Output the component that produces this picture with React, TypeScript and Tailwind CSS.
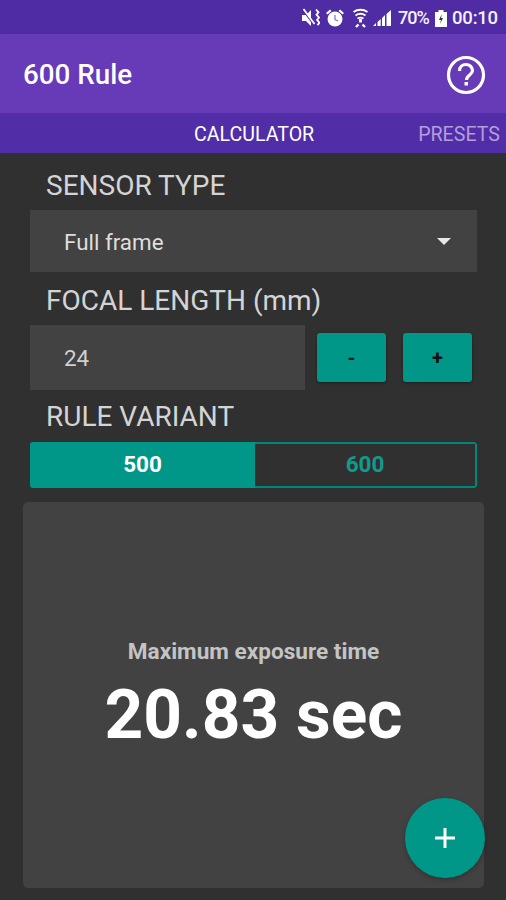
import type { ReactNode } from "react";

const font = { fontFamily: "Roboto, sans-serif" };

function StatusIcons() {
  return (
    <div className="flex items-center justify-end pr-[8px] pt-[2px] text-[18px] font-medium leading-none text-[#f4f1fb]">
      {/* muted vibrate */}
      <svg width="18" height="20" viewBox="0 0 18 20" fill="white">
        <path d="M0 7h4l5-5v16l-5-5H0z" />
        <path d="M1 2l11 15" stroke="#4f2ca3" strokeWidth="1.600" />
        <path d="M1.500 1l11 15" stroke="white" strokeWidth="1.800" />
        <path d="M14 1.500l2.500 2.800-2 2.400 2.500 2.800-2 2.400 2.500 2.800-2 2.400" stroke="white" strokeWidth="1.800" fill="none" />
      </svg>
      {/* alarm */}
      <svg width="18" height="20" viewBox="0 0 18 20" fill="white" className="ml-[6px]">
        <circle cx="9" cy="11" r="7.500" />
        <path d="M0 5l4-3.500 1.500 1.500-4 3.500zM18 5l-4-3.500-1.500 1.500 4 3.500z" />
        <path d="M9 7v4.500l3 1.500" stroke="#8f78c8" strokeWidth="1.300" fill="none" />
      </svg>
      {/* wifi */}
      <svg width="15" height="20" viewBox="0 0 15 20" fill="none" stroke="white" className="ml-[9px]">
        <path d="M0.500 4c4-3 10-3 14 0M2.500 7.500c3-2 7-2 10 0M4.500 10.500c2-1.200 4-1.200 6 0" strokeWidth="1.900" />
        <path d="M7.500 11v3.500" strokeWidth="2.800" />
        <path d="M3 19l2.500-2.500M12 19l-2.500-2.500" strokeWidth="2.400" />
      </svg>
      {/* signal */}
      <svg width="18" height="18" viewBox="0 0 18 18" fill="white" className="ml-[5px]">
        <path d="M0 17h3v-3zM4.500 17h3.200v-7l-3.200 3zM9 17h3V6L9 9zM13.500 17H18V1l-4.500 4z" />
      </svg>
      <span className="ml-[7px] w-[32px] whitespace-nowrap tracking-[-1px]">70%</span>
      {/* battery */}
      <svg width="12" height="19" viewBox="0 0 12 19" className="ml-[5px]">
        <path d="M0 3h3.500V1h5v2H12v15H0z" fill="white" />
        <path d="M6.800 5L4 11h2l-1 4 3-6H6z" fill="#333" />
      </svg>
      <span className="ml-[5px] w-[46px] whitespace-nowrap text-[18.500px] tracking-[-0.2px]">00:10</span>
    </div>
  );
}

function Label({ children }: { children: ReactNode }) {
  return <div className="pl-[46px] pt-[1px] text-[28px] leading-[30px] text-[#d4d4d4]">{children}</div>;
}

export default function App() {
  return (
    <div className="relative flex h-[900px] w-[506px] flex-col overflow-hidden bg-[#303030]" style={font}>
      <div className="flex h-[34px] items-center justify-end bg-[#4f2ca3]">
        <StatusIcons />
      </div>

      <div className="flex h-[79px] items-center justify-between bg-[#673ab7] pl-[23px] pr-[18px] shadow-[0_1px_2px_rgba(0,0,0,0.3)]">
        <span className="pt-[3px] text-[27.800px] font-medium text-white">600 Rule</span>
        <svg width="44" height="44" viewBox="0 0 44 44" fill="none" className="mt-[2px]">
          <circle cx="22" cy="22" r="17.500" stroke="white" strokeWidth="3.200" />
          <path d="M15.500 18c0-4 3-6.500 6.500-6.500s6.500 2.500 6.500 6c0 4.500-6 4.500-6 9.500" stroke="white" strokeWidth="3.200" />
          <rect x="20.500" y="29" width="3.500" height="3.500" fill="white" />
        </svg>
      </div>

      <div className="flex h-[40px] items-center overflow-hidden whitespace-nowrap bg-[#512da8] pt-[4px] text-[19.600px] leading-none">
        <span className="ml-[194px] text-white">CALCULATOR</span>
        <span className="ml-[104px] text-[#b39ddb]">PRESETS</span>
      </div>

      <div className="flex min-h-0 flex-1 flex-col pt-[17px]">
        <Label>SENSOR TYPE</Label>
        <div className="ml-[30px] mr-[29px] mt-[9px] flex h-[62px] items-center justify-between bg-[#424242] pl-[34px] pr-[26px]">
          <span className="pt-[3px] text-[22.400px] text-[#dedede]">Full frame</span>
          <span className="h-0 w-0 border-x-[7px] border-t-[7px] border-x-transparent border-t-[#e8e8e8]" />
        </div>

        <div className="mt-[13px]">
          <Label>FOCAL LENGTH (mm)</Label>
        </div>
        <div className="mt-[9px] flex items-center pl-[30px]">
          <div className="flex h-[65px] w-[275px] items-center bg-[#424242] pl-[34px] pt-[2px] text-[22.400px] text-[#d0d0d0]">24</div>
          <button className="ml-[12px] h-[49px] w-[69px] rounded-[3px] bg-[#009688] text-[20px] font-bold text-[#1a1a1a] shadow-[0_1px_3px_rgba(0,0,0,0.4)]">-</button>
          <button className="ml-[17px] h-[49px] w-[69px] rounded-[3px] bg-[#009688] text-[20px] font-bold text-[#111] shadow-[0_1px_3px_rgba(0,0,0,0.4)]">+</button>
        </div>

        <div className="mt-[11px]">
          <Label>RULE VARIANT</Label>
        </div>
        <div className="ml-[30px] mr-[29px] mt-[10px] flex h-[46px] overflow-hidden rounded-[3px] text-[22.500px] font-bold">
          <div className="flex w-[225px] items-center justify-center bg-[#009688] text-white">500</div>
          <div className="flex flex-1 items-center justify-center rounded-r-[3px] border-2 border-l-0 border-[#00897b] text-[#129a8c]">600</div>
        </div>

        <div className="ml-[23px] mr-[22px] mb-[12px] mt-[14px] flex flex-1 flex-col items-center rounded-[5px] bg-[#424242] pt-[136px]">
          <div className="text-[22.600px] font-bold leading-[28px] text-[#c4c4c4]">Maximum exposure time</div>
          <div className="mt-[9px] text-[67.600px] font-bold leading-[80px] text-white">20.83 sec</div>
        </div>
      </div>

      <button className="absolute left-[405px] top-[798px] flex h-[80px] w-[80px] items-center justify-center rounded-full bg-[#009688] shadow-[0_2px_5px_rgba(0,0,0,0.25)]">
        <svg width="20" height="20" viewBox="0 0 20 20">
          <path d="M10 0v20M0 10h20" stroke="white" strokeWidth="3" />
        </svg>
      </button>
    </div>
  );
}
